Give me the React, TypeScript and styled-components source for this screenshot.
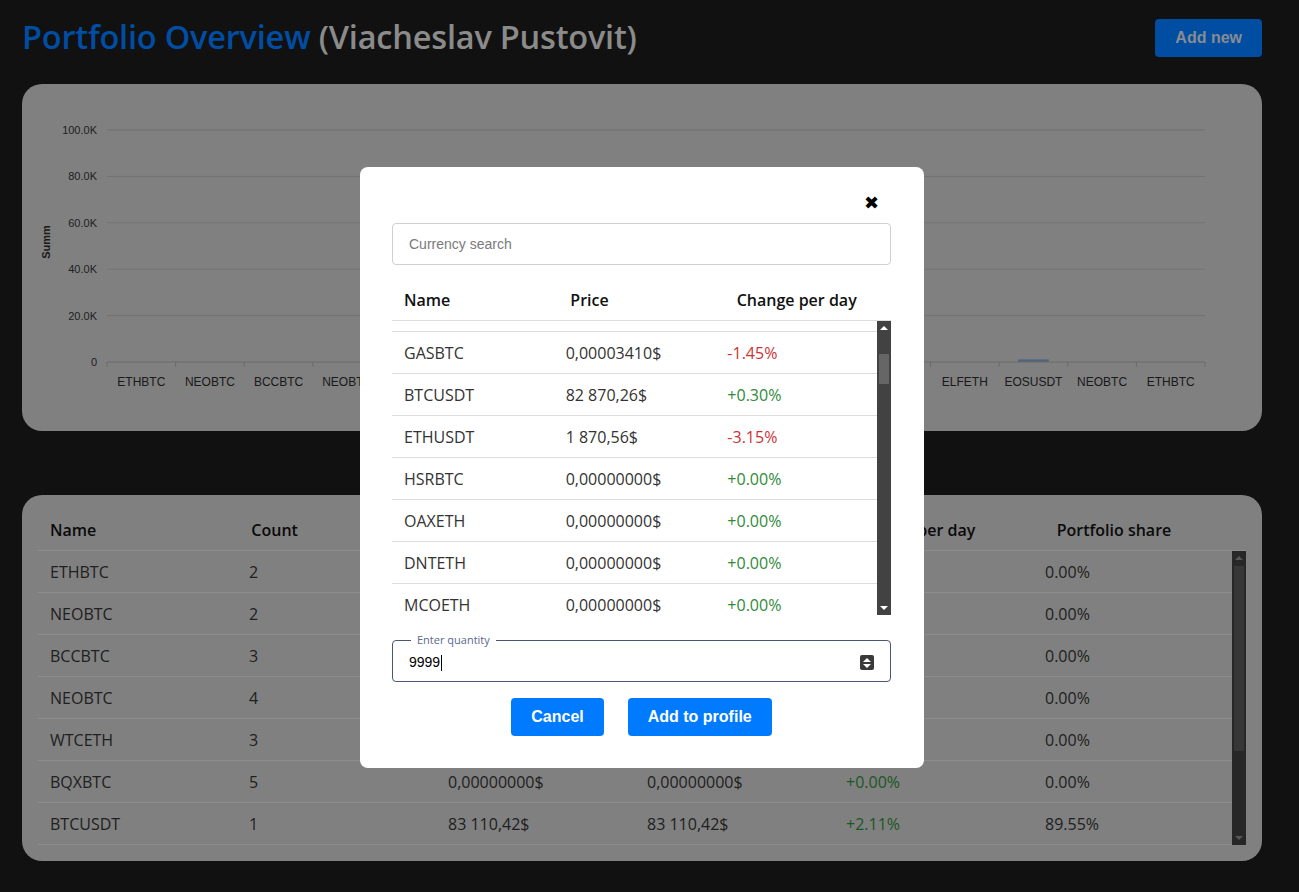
import React from "react";
import styled, { createGlobalStyle } from "styled-components";

const GlobalStyle = createGlobalStyle`
  html, body { margin: 0; padding: 0; background: #1b1b1b; }
  body { font-family: "Open Sans", "Noto Sans", sans-serif; color: #333; }
  * { box-sizing: border-box; }
`;

const Page = styled.div`
  width: 1299px;
  height: 892px;
  overflow: hidden;
  padding: 19px 37px 0 22px;
  display: flex;
  flex-direction: column;
`;

const TopBar = styled.header`
  display: flex;
  align-items: center;
  justify-content: space-between;
  height: 38px;
  margin-bottom: 27px;
`;

const Title = styled.h1`
  margin: 0 0 3px;
  font-size: 32.5px;
  line-height: 38px;
  font-weight: 600;
  color: #007bff;
  letter-spacing: -0.2px;
`;

const Owner = styled.span`
  color: #dcdcdc;
`;

const BlueButton = styled.button<{ $text?: string }>`
  height: 38px;
  padding: 0 20px;
  border: none;
  border-radius: 4px;
  background: #007bff;
  color: ${(p) => p.$text || "#ffffff"};
  font-family: "Liberation Sans", Arial, sans-serif;
  font-weight: 700;
  font-size: 16px;
`;

const Card = styled.section`
  background: #cbcbcb;
  border-radius: 20px;
`;

const ChartCard = styled(Card)`
  height: 347px;
  margin-bottom: 64px;
`;

const TableCard = styled(Card)`
  padding: 14px 16px 16px;
`;

const GridRow = styled.div<{ $head?: boolean; $line?: string }>`
  display: grid;
  grid-template-columns: repeat(var(--cols), 1fr);
  height: 42px;
  align-items: center;
  border-bottom: 1px solid ${(p) => p.$line || "#e0e0e0"};
  font-size: 16px;
  font-weight: ${(p) => (p.$head ? 600 : 400)};
  color: ${(p) => (p.$head ? "#111" : "#333")};
`;

const Cell = styled.div<{ $tone?: "up" | "down" }>`
  padding-left: 12px;
  white-space: nowrap;
  color: ${(p) => (p.$tone === "up" ? "#2f8a3a" : p.$tone === "down" ? "#cc3333" : "inherit")};
`;

const TableArea = styled.div<{ $cols: number }>`
  --cols: ${(p) => p.$cols};
`;

const BodyWrap = styled.div`
  display: flex;
  height: 294px;
`;

const Viewport = styled.div`
  flex: 1;
  overflow: hidden;
`;

const List = styled.div<{ $shift?: number }>`
  margin-top: ${(p) => -(p.$shift || 0)}px;
`;

const ScrollBar = styled.div<{ $bg: string }>`
  width: 14px;
  display: flex;
  flex-direction: column;
  background: ${(p) => p.$bg};
`;

const ArrowBox = styled.div`
  height: 14px;
  display: flex;
  align-items: center;
  justify-content: center;
`;

const Tri = styled.span<{ $dir: "up" | "down"; $color: string }>`
  width: 0;
  height: 0;
  border-left: 4px solid transparent;
  border-right: 4px solid transparent;
  ${(p) =>
    p.$dir === "up"
      ? `border-bottom: 4px solid ${p.$color};`
      : `border-top: 4px solid ${p.$color};`}
`;

const Track = styled.div`
  flex: 1;
  display: flex;
  flex-direction: column;
  align-items: center;
`;

const Thumb = styled.div<{ $top: number; $h: number; $color: string }>`
  width: 10px;
  margin-top: ${(p) => p.$top}px;
  height: ${(p) => p.$h}px;
  background: ${(p) => p.$color};
  border-radius: 1px;
`;

const Overlay = styled.div`
  position: fixed;
  inset: 0;
  background: rgba(0, 0, 0, 0.37);
  padding: 167px 0 0 360px;
`;

const Modal = styled.div`
  width: 564px;
  height: 601px;
  background: #fff;
  border-radius: 8px;
  padding: 0 33px 33px 32px;
  display: flex;
  flex-direction: column;
`;

const CloseRow = styled.div`
  height: 56px;
  flex-shrink: 0;
  display: flex;
  justify-content: flex-end;
  align-items: flex-start;
  padding: 23px 12px 0 0;
`;

const CloseBtn = styled.span`
  font-family: "DejaVu Sans", sans-serif;
  font-size: 18px;
  line-height: 26px;
  color: #000;
`;

const Search = styled.div`
  height: 42px;
  flex-shrink: 0;
  border: 1px solid #cfcfcf;
  border-radius: 4px;
  display: flex;
  align-items: center;
  padding-left: 16px;
  font-family: "Liberation Sans", Arial, sans-serif;
  font-size: 14px;
  color: #7a7a7a;
  margin-bottom: 14px;
`;

const QtyField = styled.fieldset`
  margin: 19px 0 0;
  padding: 0 16px 2px 16px;
  border: 1px solid #4a5677;
  border-radius: 4px;
`;

const QtyLegend = styled.legend`
  margin-left: 2px;
  padding: 0 6px;
  font-size: 11px;
  line-height: 12px;
  color: #5a6890;
`;

const QtyRow = styled.div`
  height: 33px;
  display: flex;
  align-items: center;
  justify-content: space-between;
  font-family: "Liberation Sans", Arial, sans-serif;
  font-size: 14px;
  color: #000;
`;

const Caret = styled.span`
  display: inline-block;
  width: 1px;
  height: 16px;
  background: #000;
  vertical-align: middle;
  margin-left: 1px;
`;

const Spinner = styled.div`
  width: 14px;
  height: 15px;
  border-radius: 2px;
  background: #3a3a3a;
  display: flex;
  flex-direction: column;
  align-items: center;
  justify-content: center;
  gap: 2px;
`;

const Actions = styled.div`
  display: flex;
  justify-content: center;
  gap: 24px;
  margin-top: 16px;
`;

type Coin = { name: string; price: string; change: string };

const modalRows: Coin[] = [
  { name: "ETHBTC", price: "0,02248000$", change: "-0.52%" },
  { name: "GASBTC", price: "0,00003410$", change: "-1.45%" },
  { name: "BTCUSDT", price: "82 870,26$", change: "+0.30%" },
  { name: "ETHUSDT", price: "1 870,56$", change: "-3.15%" },
  { name: "HSRBTC", price: "0,00000000$", change: "+0.00%" },
  { name: "OAXETH", price: "0,00000000$", change: "+0.00%" },
  { name: "DNTETH", price: "0,00000000$", change: "+0.00%" },
  { name: "MCOETH", price: "0,00000000$", change: "+0.00%" },
  { name: "ICNETH", price: "0,00000000$", change: "+0.00%" },
];

const portfolio = [
  ["ETHBTC", "2", "0,00000000$", "0,00000000$", "+0.00%", "0.00%"],
  ["NEOBTC", "2", "0,00000000$", "0,00000000$", "+0.00%", "0.00%"],
  ["BCCBTC", "3", "0,00000000$", "0,00000000$", "+0.00%", "0.00%"],
  ["NEOBTC", "4", "0,00000000$", "0,00000000$", "+0.00%", "0.00%"],
  ["WTCETH", "3", "0,00000000$", "0,00000000$", "+0.00%", "0.00%"],
  ["BQXBTC", "5", "0,00000000$", "0,00000000$", "+0.00%", "0.00%"],
  ["BTCUSDT", "1", "83 110,42$", "83 110,42$", "+2.11%", "89.55%"],
];

const tone = (v: string) => (v.startsWith("-") ? "down" : "up");

const Scroll = ({
  bg,
  arrow,
  thumb,
  top,
  h,
}: {
  bg: string;
  arrow: string;
  thumb: string;
  top: number;
  h: number;
}) => (
  <ScrollBar $bg={bg}>
    <ArrowBox>
      <Tri $dir="up" $color={arrow} />
    </ArrowBox>
    <Track>
      <Thumb $top={top} $h={h} $color={thumb} />
    </Track>
    <ArrowBox>
      <Tri $dir="down" $color={arrow} />
    </ArrowBox>
  </ScrollBar>
);

const categories = [
  "ETHBTC",
  "NEOBTC",
  "BCCBTC",
  "NEOBTC",
  "WTCETH",
  "BQXBTC",
  "BTCUSDT",
  "ETHUSDT",
  "GASBTC",
  "HSRBTC",
  "OAXETH",
  "DNTETH",
  "ELFETH",
  "EOSUSDT",
  "NEOBTC",
  "ETHBTC",
];
const values = [0, 0, 0, 0, 0, 0, 83110, 0, 0, 0, 0, 0, 0, 700, 0, 0];

const Chart = () => {
  const left = 85;
  const right = 1183;
  const y0 = 278;
  const yTop = 46;
  const step = (right - left) / categories.length;
  const ticks = [0, 20, 40, 60, 80, 100];
  const yOf = (v: number) => y0 - ((y0 - yTop) * v) / 100000;
  return (
    <svg width="1240" height="347" fontFamily="Liberation Sans, Arial, sans-serif">
      <text
        x="0"
        y="0"
        transform="translate(28 158) rotate(-90)"
        textAnchor="middle"
        fontSize="11"
        fontWeight="700"
        fill="#2a2a2a"
      >
        Summ
      </text>
      {ticks.map((t) => {
        const y = yOf(t * 1000);
        return (
          <g key={t}>
            {t > 0 && <line x1={left} x2={right} y1={y} y2={y} stroke="#b4b4b4" strokeWidth="1" />}
            <text x="75" y={y + 4} textAnchor="end" fontSize="11" fill="#333">
              {t === 0 ? "0" : `${t}.0K`}
            </text>
          </g>
        );
      })}
      {values.map((v, i) =>
        v > 0 ? (
          <rect
            key={`b${i}`}
            x={left + i * step + 19}
            y={yOf(v) - 1}
            width={step - 38}
            height={Math.max(y0 - yOf(v), 1) + 1}
            fill="#7f9fc4"
          />
        ) : null
      )}
      <line x1={left} x2={right} y1={y0} y2={y0} stroke="#a8a8a8" strokeWidth="1" />
      {categories.map((c, i) => (
        <g key={`c${i}`}>
          <line
            x1={left + i * step}
            x2={left + i * step}
            y1={y0}
            y2={y0 + 5}
            stroke="#a8a8a8"
          />
          <text x={left + i * step + step / 2} y="302" textAnchor="middle" fontSize="12" fill="#2a2a2a">
            {c}
          </text>
        </g>
      ))}
      <line x1={right} x2={right} y1={y0} y2={y0 + 5} stroke="#a8a8a8" />
    </svg>
  );
};

export default function App() {
  return (
    <>
      <GlobalStyle />
      <Page>
        <TopBar>
          <Title>
            Portfolio Overview <Owner>(Viacheslav Pustovit)</Owner>
          </Title>
          <BlueButton $text="#d6dde8">Add new</BlueButton>
        </TopBar>

        <ChartCard>
          <Chart />
        </ChartCard>

        <TableCard>
          <TableArea $cols={6}>
            <GridRow $head $line="#e0e0e0">
              <Cell>Name</Cell>
              <Cell>Count</Cell>
              <Cell>Price</Cell>
              <Cell>Summ</Cell>
              <Cell>Change per day</Cell>
              <Cell>Portfolio share</Cell>
            </GridRow>
            <BodyWrap>
              <Viewport>
                <List>
                  {portfolio.map((r, i) => (
                    <GridRow key={i}>
                      <Cell>{r[0]}</Cell>
                      <Cell>{r[1]}</Cell>
                      <Cell>{r[2]}</Cell>
                      <Cell>{r[3]}</Cell>
                      <Cell $tone={tone(r[4])}>{r[4]}</Cell>
                      <Cell>{r[5]}</Cell>
                    </GridRow>
                  ))}
                </List>
              </Viewport>
              <Scroll bg="#3f3f3f" arrow="#8a8a8a" thumb="#575757" top={1} h={185} />
            </BodyWrap>
          </TableArea>
        </TableCard>
      </Page>

      <Overlay>
        <Modal>
          <CloseRow>
            <CloseBtn>✖</CloseBtn>
          </CloseRow>
          <Search>Currency search</Search>
          <TableArea $cols={3}>
            <GridRow $head $line="#dddddd">
              <Cell>Name</Cell>
              <Cell>Price</Cell>
              <Cell>Change per day</Cell>
            </GridRow>
            <BodyWrap>
              <Viewport>
                <List $shift={31}>
                  {modalRows.map((r, i) => (
                    <GridRow key={i} $line="#dddddd">
                      <Cell>{r.name}</Cell>
                      <Cell>{r.price}</Cell>
                      <Cell $tone={tone(r.change)}>{r.change}</Cell>
                    </GridRow>
                  ))}
                </List>
              </Viewport>
              <Scroll bg="#424242" arrow="#ffffff" thumb="#666666" top={19} h={30} />
            </BodyWrap>
          </TableArea>
          <QtyField>
            <QtyLegend>Enter quantity</QtyLegend>
            <QtyRow>
              <span>
                9999
                <Caret />
              </span>
              <Spinner>
                <Tri $dir="up" $color="#fff" />
                <Tri $dir="down" $color="#fff" />
              </Spinner>
            </QtyRow>
          </QtyField>
          <Actions>
            <BlueButton>Cancel</BlueButton>
            <BlueButton>Add to profile</BlueButton>
          </Actions>
        </Modal>
      </Overlay>
    </>
  );
}
